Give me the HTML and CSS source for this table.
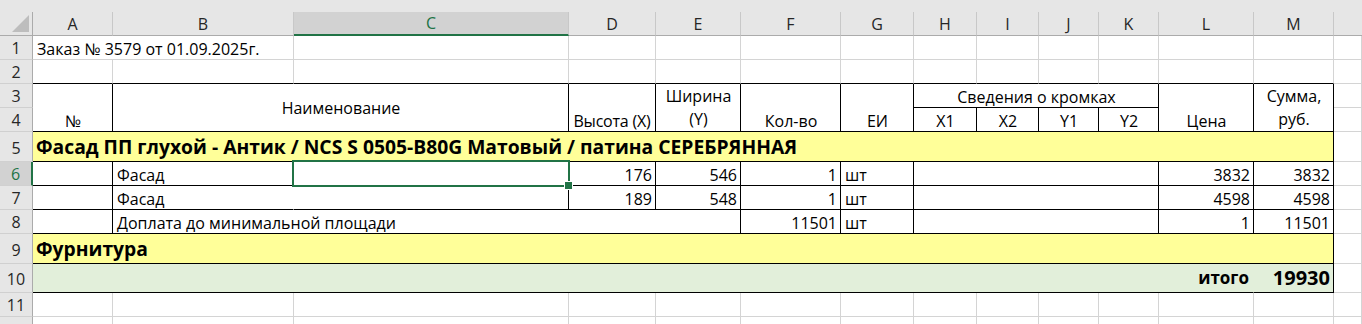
FILE: index.html
```html
<!DOCTYPE html>
<html lang="ru">
<head>
<meta charset="utf-8">
<title>Заказ № 3579</title>
<link rel="stylesheet" href="styles.css">
</head>
<body>
<div class="sheet">
  <div class="topstrip"></div>
  <div class="grid">
    <!-- column headers -->
    <div class="ch corner"><span class="tri"></span></div>
    <div class="ch">A</div>
    <div class="ch">B</div>
    <div class="ch csel">C</div>
    <div class="ch">D</div>
    <div class="ch">E</div>
    <div class="ch">F</div>
    <div class="ch">G</div>
    <div class="ch">H</div>
    <div class="ch">I</div>
    <div class="ch">J</div>
    <div class="ch">K</div>
    <div class="ch">L</div>
    <div class="ch">M</div>
    <div class="ch last"></div>

    <!-- row 1 -->
    <div class="rh">1</div>
    <div class="c s2">Заказ № 3579 от 01.09.2025г.</div>
    <div class="c"></div><div class="c"></div><div class="c"></div><div class="c"></div><div class="c"></div>
    <div class="c"></div><div class="c"></div><div class="c"></div><div class="c"></div><div class="c"></div><div class="c"></div><div class="c"></div>

    <!-- row 2 -->
    <div class="rh">2</div>
    <div class="c bb"></div><div class="c bb"></div><div class="c bb"></div><div class="c bb"></div><div class="c bb"></div><div class="c bb"></div><div class="c bb"></div>
    <div class="c bb"></div><div class="c bb"></div><div class="c bb"></div><div class="c bb"></div><div class="c bb"></div><div class="c bb"></div><div class="c"></div>

    <!-- rows 3-4 header -->
    <div class="rh">3</div>
    <div class="c k r2 ctr">№</div>
    <div class="c k r2 s2 ctr mid">Наименование</div>
    <div class="c k r2 ctr tight">Высота (X)</div>
    <div class="c k r2 ctr wrap">Ширина<br>(Y)</div>
    <div class="c k r2 ctr">Кол-во</div>
    <div class="c k r2 ctr">ЕИ</div>
    <div class="c k s4 ctr">Сведения о кромках</div>
    <div class="c k r2 ctr">Цена</div>
    <div class="c k r2 ctr wrap">Сумма,<br>руб.</div>
    <div class="c"></div>

    <div class="rh">4</div>
    <div class="c k ctr">X1</div>
    <div class="c k ctr">X2</div>
    <div class="c k ctr">Y1</div>
    <div class="c k ctr">Y2</div>
    <div class="c"></div>

    <!-- row 5 -->
    <div class="rh tall">5</div>
    <div class="c k s13 yellow big">Фасад ПП глухой - Антик / NCS S 0505-B80G Матовый / патина СЕРЕБРЯННАЯ</div>
    <div class="c"></div>

    <!-- row 6 -->
    <div class="rh rsel">6</div>
    <div class="c k"></div>
    <div class="c bb nr">Фасад</div>
    <div class="c k selcell"></div>
    <div class="c k rt">176</div>
    <div class="c k rt">546</div>
    <div class="c k rt">1</div>
    <div class="c k">шт</div>
    <div class="c k s4"></div>
    <div class="c k rt">3832</div>
    <div class="c k rt">3832</div>
    <div class="c"></div>

    <!-- row 7 -->
    <div class="rh">7</div>
    <div class="c k"></div>
    <div class="c bb nr">Фасад</div>
    <div class="c k"></div>
    <div class="c k rt">189</div>
    <div class="c k rt">548</div>
    <div class="c k rt">1</div>
    <div class="c k">шт</div>
    <div class="c k s4"></div>
    <div class="c k rt">4598</div>
    <div class="c k rt">4598</div>
    <div class="c"></div>

    <!-- row 8 -->
    <div class="rh">8</div>
    <div class="c k"></div>
    <div class="c k s4">Доплата до минимальной площади</div>
    <div class="c k rt">11501</div>
    <div class="c k">шт</div>
    <div class="c k s4"></div>
    <div class="c k rt">1</div>
    <div class="c k rt">11501</div>
    <div class="c"></div>

    <!-- row 9 -->
    <div class="rh tall">9</div>
    <div class="c k s13 yellow big">Фурнитура</div>
    <div class="c"></div>

    <!-- row 10 -->
    <div class="rh tall">10</div>
    <div class="c bb nr s12 green rt total"><span class="itogo">итого</span></div>
    <div class="c k green rt total">19930</div>
    <div class="c"></div>

    <!-- row 11 -->
    <div class="rh">11</div>
    <div class="c"></div><div class="c"></div><div class="c"></div><div class="c"></div><div class="c"></div><div class="c"></div><div class="c"></div>
    <div class="c"></div><div class="c"></div><div class="c"></div><div class="c"></div><div class="c"></div><div class="c"></div><div class="c"></div>

    <!-- row 12 (only its top edge is in view) -->
    <div class="rh edge"></div>
    <div class="c edge"></div><div class="c edge"></div><div class="c edge"></div><div class="c edge"></div><div class="c edge"></div><div class="c edge"></div><div class="c edge"></div>
    <div class="c edge"></div><div class="c edge"></div><div class="c edge"></div><div class="c edge"></div><div class="c edge"></div><div class="c edge"></div><div class="c edge"></div>
  </div>
</div>
</body>
</html>
```

FILE: styles.css
```css
* { box-sizing: border-box; }
html, body { margin: 0; padding: 0; background: #fff; }
body {
  font-family: "Open Sans", "Noto Sans", sans-serif;
  font-size: 16px;
  color: #000;
  width: 1362px;
  height: 324px;
  overflow: hidden;
}
.sheet { width: 1362px; }
.topstrip { height: 12px; background: #e6e6e6; }

.grid {
  display: grid;
  grid-template-columns: 33px 80px 181px 275px 87px 85px 100px 73px 63px 62px 60px 60px 95px 80px 28px;
  grid-template-rows: 24px 24px 24px 24px 24px 30px 24px 24px 24px 30px 29px 24px 7px;
  background: #fff;
}

/* column headers */
.ch {
  background: #e6e6e6;
  border-right: 1px solid #c8c8c8;
  border-bottom: 1px solid #ababab;
  display: flex;
  align-items: center;
  justify-content: center;
  font-size: 16px;
  color: #262626;
  line-height: 20px;
}
.ch.last { border-right: none; }
.ch.corner { position: relative; border-right-color: #ababab; }
.tri {
  position: absolute;
  right: 3px;
  bottom: 3px;
  width: 0;
  height: 0;
  border-left: 17px solid transparent;
  border-bottom: 17px solid #bdbdbd;
}
.ch.csel {
  background: #d2d2d2;
  color: #217346;
  border-bottom: 2px solid #217346;
}

/* row headers */
.rh {
  background: #e6e6e6;
  border-right: 1px solid #ababab;
  border-bottom: 1px solid #d0d0d0;
  display: flex;
  align-items: flex-end;
  justify-content: center;
  font-size: 16px;
  color: #262626;
  line-height: 20px;
  padding-bottom: 1px;
}
.rh.tall { padding-bottom: 3px; }
.rh.rsel {
  background: #d2d2d2;
  color: #217346;
  border-right: 2px solid #217346;
}

/* cells */
.c {
  border-right: 1px solid #d4d4d4;
  border-bottom: 1px solid #d4d4d4;
  display: flex;
  align-items: flex-end;
  padding: 0 3px 0 4px;
  white-space: nowrap;
  line-height: 20px;
  min-width: 0;
}
.edge { border-bottom: none; padding: 0; }
.k { border-right-color: #000; border-bottom-color: #000; }
.bb { border-bottom-color: #000; }
.nr { border-right-color: transparent; }
.rt { justify-content: flex-end; }
.ctr { justify-content: center; text-align: center; }
.mid { align-items: center; }
.tight { padding: 0 1px; letter-spacing: -0.2px; }
.wrap { white-space: normal; line-height: 23px; }

.s2 { grid-column: span 2; }
.s4 { grid-column: span 4; }
.s12 { grid-column: span 12; }
.s13 { grid-column: span 13; }
.r2 { grid-row: span 2; }

.yellow { background: #ffff99; }
.green { background: #e2efda; }
.big {
  font-weight: 700;
  font-size: 19.3px;
  line-height: 28px;
  padding-left: 3px;
}
.total {
  font-weight: 700;
  font-size: 20px;
  line-height: 28px;
}
.itogo { margin-right: 1px; font-size: 17px; }

.selcell { position: relative; }
.selcell::after {
  content: "";
  position: absolute;
  left: -2px;
  top: -2px;
  right: -2px;
  bottom: -2px;
  border: 2px solid #217346;
}
.selcell::before {
  content: "";
  position: absolute;
  right: -5px;
  bottom: -5px;
  width: 7px;
  height: 7px;
  background: #217346;
  border: 1px solid #fff;
  z-index: 2;
}
```
